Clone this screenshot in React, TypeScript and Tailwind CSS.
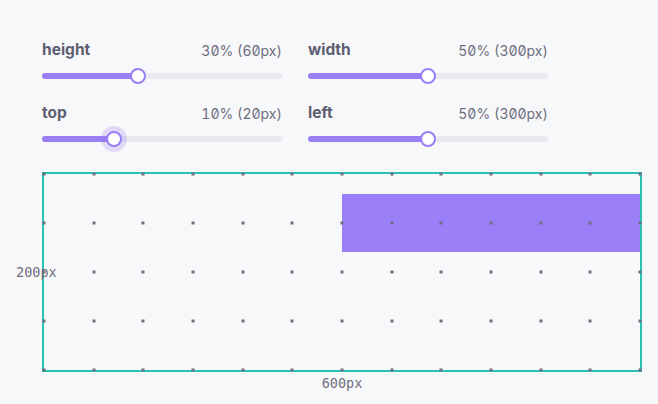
import React from 'react';

type SliderProps = {
  label: string;
  value: string;
  pos: number; // thumb position on track, 0..1
  focused?: boolean;
};

const valueText =
  "text-[14px] text-[#6e6e7e] font-['Inter',sans-serif] [font-feature-settings:'zero','tnum']";
const dimText = "text-[13.5px] leading-4 text-[#6e6e7e] font-['DejaVu_Sans_Mono',monospace]";

function Slider({ label, value, pos, focused }: SliderProps) {
  return (
    <div className="w-[240px]">
      <div className="flex h-5 items-center justify-between">
        <span className="text-[15.5px] font-bold text-[#5e5e72] font-['Inter',sans-serif]">{label}</span>
        <span className={valueText}>{value}</span>
      </div>
      <div className="relative mt-[9px] h-[14px]">
        <div className="absolute inset-x-0 top-1/2 h-[6px] -translate-y-1/2 rounded-full bg-[#e8e9f1]" />
        <div
          className="absolute left-0 top-1/2 h-[6px] -translate-y-1/2 rounded-full bg-[#9a7ff5]"
          style={{ width: `${pos * 100}%` }}
        />
        {focused && (
          <div
            className="absolute top-1/2 h-[26px] w-[26px] -translate-x-1/2 -translate-y-1/2 rounded-full bg-[#9a7ff5]/25"
            style={{ left: `${pos * 100}%` }}
          />
        )}
        <div
          className="absolute top-1/2 h-[16px] w-[16px] -translate-x-1/2 -translate-y-1/2 rounded-full border-2 border-[#9a7ff5] bg-white"
          style={{ left: `${pos * 100}%` }}
        />
      </div>
    </div>
  );
}

const cols = Array.from({ length: 13 }, (_, i) => i / 12);
const rows = Array.from({ length: 5 }, (_, i) => i / 4);

export default function App() {
  return (
    <div className="h-[404px] w-[658px] overflow-hidden bg-[#f7f8fa] pl-[42px] pt-[40px]">
      <div className="grid w-[506px] grid-cols-2 gap-x-[26px] gap-y-[20px]">
        <Slider label="height" value="30% (60px)" pos={0.4} />
        <Slider label="width" value="50% (300px)" pos={0.5} />
        <Slider label="top" value="10% (20px)" pos={0.3} focused />
        <Slider label="left" value="50% (300px)" pos={0.5} />
      </div>

      {/* canvas preview */}
      <div className="relative mt-[26px] h-[200px] w-[600px] border-2 border-[#2bc1b5]">
        <div className="absolute left-1/2 top-[10%] h-[30%] w-1/2 bg-[#9a7ff9]" />
        {rows.map((r) =>
          cols.map((c) => (
            <div
              key={`${r}-${c}`}
              className="absolute h-[3px] w-[3px] -translate-x-1/2 -translate-y-1/2 bg-[#6f6f7e]"
              style={{ left: `${c * 100}%`, top: `${r * 100}%` }}
            />
          ))
        )}
        <span className={`absolute left-[-28px] top-1/2 -translate-y-1/2 ${dimText}`}>200px</span>
        <span className={`absolute left-1/2 top-full mt-[5px] -translate-x-1/2 ${dimText}`}>600px</span>
      </div>
    </div>
  );
}
